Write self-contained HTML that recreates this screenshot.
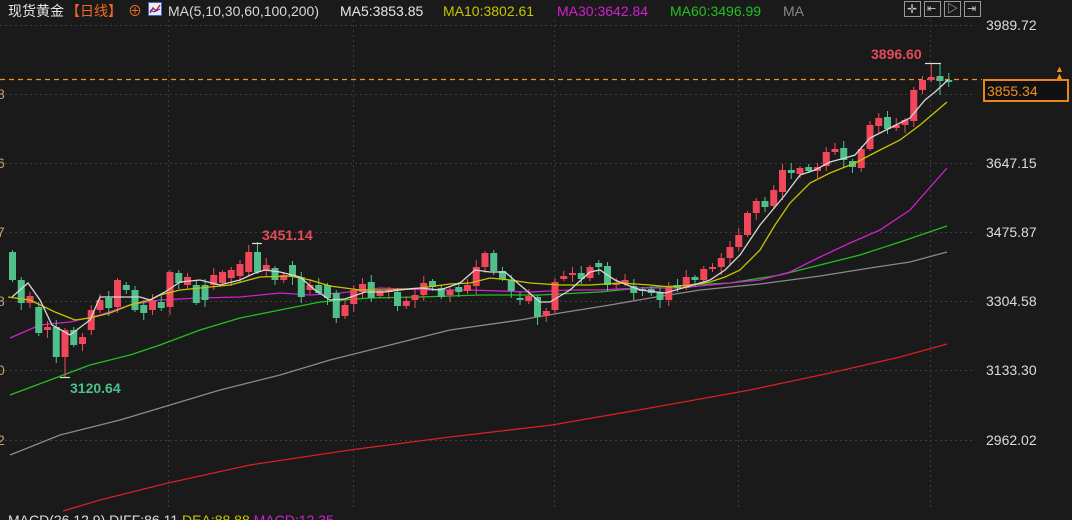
<!DOCTYPE html>
<html><head><meta charset="utf-8"><style>
html,body{margin:0;padding:0;background:#1a1a1a;width:1072px;height:520px;overflow:hidden;}
body{position:relative;font-family:"Liberation Sans","Noto Sans CJK SC",sans-serif;}
.t{position:absolute;font-size:14px;white-space:nowrap;line-height:16px;}
.ax{position:absolute;left:986px;font-size:14px;color:#dcdcdc;line-height:16px;}
.btn{position:absolute;top:1px;width:17px;height:16px;border:1px solid #999;box-sizing:border-box;background:#1a1a1a;}
</style></head><body>
<svg id="s" width="1072" height="520" style="position:absolute;left:0;top:0">
<g stroke="#3c3c3c" stroke-dasharray="2,3" stroke-width="1">
<line x1="0" y1="25.5" x2="975" y2="25.5"/><line x1="0" y1="94.5" x2="975" y2="94.5"/>
<line x1="0" y1="163.5" x2="975" y2="163.5"/><line x1="0" y1="232.5" x2="975" y2="232.5"/>
<line x1="0" y1="301.5" x2="975" y2="301.5"/><line x1="0" y1="370.5" x2="975" y2="370.5"/>
<line x1="0" y1="440.5" x2="975" y2="440.5"/>
<line x1="168.5" y1="20" x2="168.5" y2="508"/><line x1="353.5" y1="20" x2="353.5" y2="508"/>
<line x1="554.5" y1="20" x2="554.5" y2="508"/><line x1="738.5" y1="20" x2="738.5" y2="508"/>
<line x1="930.5" y1="20" x2="930.5" y2="508"/>
</g>
<line x1="0" y1="79.5" x2="982" y2="79.5" stroke="#f0901e" stroke-dasharray="5,4" stroke-width="1.3"/>
<g fill="none" stroke-width="1.3">
<polyline stroke="#d82020" points="63,511 100,500 168,483 250,465 350,450 450,437 552,425 650,408 750,390 830,373 900,357 947,344"/>
<polyline stroke="#8a8a8a" points="10,455 60,435 120,420 170,405 220,390 280,375 330,360 390,345 450,330 520,320 560,313 610,305 650,298 700,290 760,284 820,276 870,268 910,262 947,252"/>
<polyline stroke="#20c020" points="10,395 50,380 90,365 130,355 160,345 200,330 240,318 280,310 320,302 370,298 420,297 480,295 540,295 600,292 640,288 690,285 730,283 780,275 820,265 860,255 900,242 947,226"/>
<polyline stroke="#d020d0" points="10,338 40,325 70,322 100,315 130,305 160,300 200,298 240,297 280,293 310,295 340,293 380,288 430,290 470,290 530,292 570,290 600,290 640,288 680,288 720,284 760,280 790,272 820,257 850,243 880,230 910,210 947,168"/>
</g>
<g id="c"></g>
<g fill="none" stroke-width="1.3">
<polyline stroke="#c8c400" points="8,297 30,300 55,312 75,320 90,318 110,313 130,305 150,300 160,295 180,290 200,288 230,285 260,277 290,276 310,280 330,286 360,290 390,290 420,288 450,284 470,283 490,278 510,280 530,283 560,285 590,285 620,283 650,285 670,287 690,285 710,282 725,277 740,270 760,250 775,225 790,203 810,183 830,173 855,163 880,150 900,140 920,125 947,102"/>
<polyline stroke="#d8d8d8" points="12,297 28,283 40,300 52,325 70,335 90,320 100,297 120,297 140,297 150,300 165,292 180,282 200,280 220,285 240,280 255,273 265,270 280,272 300,277 315,290 330,300 345,299 365,292 385,292 400,290 420,288 440,290 460,283 475,270 490,272 505,272 520,285 540,302 550,302 570,290 590,272 600,270 615,280 640,290 665,293 690,286 710,280 725,270 740,255 760,225 785,195 800,175 815,170 830,162 845,158 855,155 870,138 890,128 910,118 925,100 935,92 948,80"/>
</g>
<g stroke="#e0e0e0" stroke-width="1.2">
<line x1="60" y1="377.5" x2="70" y2="377.5"/><line x1="252" y1="243.5" x2="262" y2="243.5"/>
<line x1="925" y1="63.5" x2="941" y2="63.5"/>
</g>
</svg>
<div class="t" style="left:8px;top:3px;color:#e8e8e8">现货黄金</div>
<div class="t" style="left:66px;top:3px;color:#f06a24">【日线】</div>
<div class="t" style="left:128px;top:3px;color:#f06a24">⊕</div>
<div style="position:absolute;left:148px;top:2px;width:14px;height:14px;background:#e8eefa;border:1px solid #4466cc;box-sizing:border-box"><svg width="12" height="12" style="position:absolute;left:0;top:0"><polyline points="1,10 4,5 7,8 11,2" fill="none" stroke="#d02020" stroke-width="1.5"/><polyline points="1,7 5,9 11,6" fill="none" stroke="#2040c0" stroke-width="1"/></svg></div>
<div class="t" style="left:168px;top:3px;color:#d8d8d8">MA(5,10,30,60,100,200)</div>
<div class="t" style="left:340px;top:3px;color:#e8e8e8">MA5:3853.85</div>
<div class="t" style="left:443px;top:3px;color:#c8c400">MA10:3802.61</div>
<div class="t" style="left:557px;top:3px;color:#d020d0">MA30:3642.84</div>
<div class="t" style="left:670px;top:3px;color:#20c020">MA60:3496.99</div>
<div class="t" style="left:783px;top:3px;color:#888">MA</div>
<div class="btn" style="left:904px"></div><div class="btn" style="left:924px"></div><div class="btn" style="left:944px"></div><div class="btn" style="left:964px"></div>
<div class="t" style="left:907px;top:1px;color:#ccc;font-size:12px">✛</div>
<div class="t" style="left:927px;top:1px;color:#ccc;font-size:11px">⇤</div>
<div class="t" style="left:947px;top:1px;color:#ccc;font-size:11px">▷</div>
<div class="t" style="left:967px;top:1px;color:#ccc;font-size:11px">⇥</div>
<div class="ax" style="top:17px">3989.72</div>
<div class="ax" style="top:155px">3647.15</div>
<div class="ax" style="top:224px">3475.87</div>
<div class="ax" style="top:293px">3304.58</div>
<div class="ax" style="top:362px">3133.30</div>
<div class="ax" style="top:432px">2962.02</div>
<div style="position:absolute;left:983px;top:79px;width:86px;height:23px;border:2px solid #e8861a;box-sizing:border-box;background:#111"></div>
<div class="t" style="left:987px;top:83px;color:#f0901e">3855.34</div>
<div class="t" style="left:1055px;top:66px;color:#f0901e;font-size:9px;line-height:7px">▲<br>▲</div>
<div class="t" style="left:-3px;top:86px;color:#c8a070">8</div>
<div class="t" style="left:-3px;top:155px;color:#c8a070">6</div>
<div class="t" style="left:-3px;top:224px;color:#c8a070">7</div>
<div class="t" style="left:-3px;top:293px;color:#c8a070">8</div>
<div class="t" style="left:-3px;top:362px;color:#c8a070">0</div>
<div class="t" style="left:-3px;top:432px;color:#c8a070">2</div>
<div class="t" style="left:871px;top:46px;color:#e84a5a;font-weight:bold">3896.60</div>
<div class="t" style="left:262px;top:227px;color:#e84a5a;font-weight:bold">3451.14</div>
<div class="t" style="left:70px;top:380px;color:#4fbf8c;font-weight:bold">3120.64</div>
<div class="t" style="left:8px;top:512px;color:#ddd">MACD(26,12,9) DIFF:86.11 <span style="color:#c8c400">DEA:88.88</span> <span style="color:#d020d0">MACD:12.35</span></div>
<script>
var d=[[252,280],[280,303],[303,296],[307,333],[330,327],[327,357],[357,330],[330,345],[344,337],[330,310],[310,300],[298,308],[307,280],[285,290],[290,310],[305,313],[310,300],[302,308],[307,272],[273,283],[285,277],[285,303],[285,300],[285,275],[283,272],[278,270],[276,264],[272,252],[252,272],[270,265],[268,280],[280,275],[265,277],[277,297],[290,285],[285,293],[285,298],[293,318],[316,305],[304,290],[292,284],[282,298],[296,291],[292,290],[292,306],[306,301],[300,295],[295,283],[281,287],[288,297],[295,290],[287,292],[291,285],[286,267],[267,253],[253,271],[271,279],[280,291],[298,300],[301,296],[297,317],[316,311],[310,282],[279,276],[275,273],[273,279],[278,267],[263,267],[266,285],[285,283],[284,280],[286,293],[289,290],[289,293],[292,300],[300,287],[285,288],[288,277],[277,280],[280,269],[268,267],[267,258],[258,247],[247,235],[235,213],[213,201],[201,207],[206,190],[192,170],[170,173],[174,168],[167,171],[171,167],[166,152],[152,149],[148,160],[161,167],[168,149],[149,125],[126,118],[117,129],[128,125],[125,120],[121,90],[90,80],[80,77],[76,81],[80,82]];
var ex={6:[0,377],27:[245,0],28:[242,0],105:[63,0],106:[63,95]};
var h='';
for(var i=0;i<d.length;i++){var x=12+8.75*i,o=d[i][0],c=d[i][1];var up=c<o;var col=up?'#f0485a':'#4fbf8c';
var t=Math.min(o,c),b=Math.max(o,c);if(b-t<2){b=t+2;}
var w1=2+((i*7)%6),w2=2+((i*5)%7);var hi=t-w1,lo=b+w2;if(ex[i]){if(ex[i][0])hi=ex[i][0];if(ex[i][1])lo=ex[i][1];}
h+='<line x1="'+(x+0.5)+'" x2="'+(x+0.5)+'" y1="'+hi+'" y2="'+lo+'" stroke="'+col+'" stroke-width="1"/>';
h+='<rect x="'+(x-3)+'" y="'+t+'" width="7" height="'+(b-t)+'" fill="'+col+'"/>';}
document.getElementById('c').innerHTML=h;
</script>
</body></html>
